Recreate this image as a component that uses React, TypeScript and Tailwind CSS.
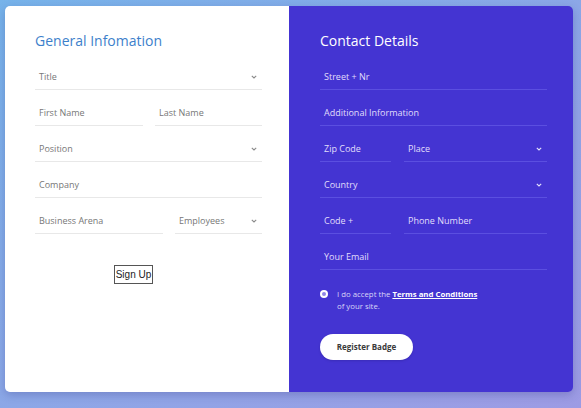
import React from "react";

const font = { fontFamily: '"Open Sans", "Liberation Sans", sans-serif' };

function Chevron({ light }: { light?: boolean }) {
  return (
    <svg width="6" height="4" viewBox="0 0 6 4" className="mb-[3px]">
      <path
        d="M0.8 0.8 L3 3 L5.2 0.8"
        fill="none"
        stroke={light ? "#e4e2fb" : "#8a8a8a"}
        strokeWidth="1.1"
      />
    </svg>
  );
}

type FieldProps = {
  label: string;
  select?: boolean;
  light?: boolean;
  className?: string;
};

function Field({ label, select, light, className = "" }: FieldProps) {
  return (
    <div
      className={`flex h-[36px] items-end justify-between border-b pb-[7px] pl-[4px] pr-[5px] ${
        light ? "border-[#5b4fe0] text-[#e1defb]" : "border-[#e8e8e8] text-[#777777]"
      } ${className}`}
    >
      <span className="text-[9px] leading-[10px]">{label}</span>
      {select && <Chevron light={light} />}
    </div>
  );
}

function GeneralInfo() {
  return (
    <div className="w-[284px] bg-white pl-[30px] pr-[27px] pt-[25px]">
      <h2 className="text-[14px] leading-[20px] text-[#3d7fcb]">General Infomation</h2>
      <div className="mt-[3px]">
        <Field label="Title" select />
        <div className="flex gap-[12px]">
          <Field label="First Name" className="w-[108px]" />
          <Field label="Last Name" className="flex-1" />
        </div>
        <Field label="Position" select />
        <Field label="Company" />
        <div className="flex gap-[12px]">
          <Field label="Business Arena" className="w-[128px]" />
          <Field label="Employees" select className="flex-1" />
        </div>
      </div>
      <button
        className="ml-[79px] mt-[31px] h-[19px] w-[39px] border border-[#555] bg-white text-[10px] leading-none text-[#222]"
        style={{ fontFamily: '"Liberation Sans", Arial, sans-serif' }}
      >
        Sign Up
      </button>
    </div>
  );
}

function ContactDetails() {
  return (
    <div className="w-[284px] bg-[#4434d2] pl-[31px] pr-[26px] pt-[25px]">
      <h2 className="text-[14px] leading-[20px] text-white">Contact Details</h2>
      <div className="mt-[3px]">
        <Field label="Street + Nr" light />
        <Field label="Additional Information" light />
        <div className="flex gap-[13px]">
          <Field label="Zip Code" light className="w-[71px]" />
          <Field label="Place" select light className="flex-1" />
        </div>
        <Field label="Country" select light />
        <div className="flex gap-[13px]">
          <Field label="Code +" light className="w-[71px]" />
          <Field label="Phone Number" light className="flex-1" />
        </div>
        <Field label="Your Email" light />
      </div>
      <div className="mt-[18px] flex gap-[9px]">
        <span className="mt-[2px] flex h-[8px] w-[8px] items-center justify-center rounded-full bg-white">
          <span className="h-[4px] w-[4px] rounded-full bg-[#8f86e6]" />
        </span>
        <p className="text-[7.8px] leading-[12px] text-[#d9d6f8]">
          I do accept the{" "}
          <span className="font-bold text-white underline">Terms and Conditions</span>
          <br />
          of your site.
        </p>
      </div>
      <button className="mt-[22px] h-[26px] w-[93px] rounded-full bg-white text-[8px] font-bold text-[#3a3a3a] shadow-sm">
        Register Badge
      </button>
    </div>
  );
}

export default function App() {
  return (
    <div
      className="h-[408px] w-[581px] overflow-hidden bg-gradient-to-br from-[#76b3ea] to-[#9d9be4] pl-[5px] pt-[6px]"
      style={font}
    >
      <div className="flex h-[386px] w-[568px] overflow-hidden rounded-[5px] shadow-[0_3px_8px_rgba(40,40,120,0.25)]">
        <GeneralInfo />
        <ContactDetails />
      </div>
    </div>
  );
}
